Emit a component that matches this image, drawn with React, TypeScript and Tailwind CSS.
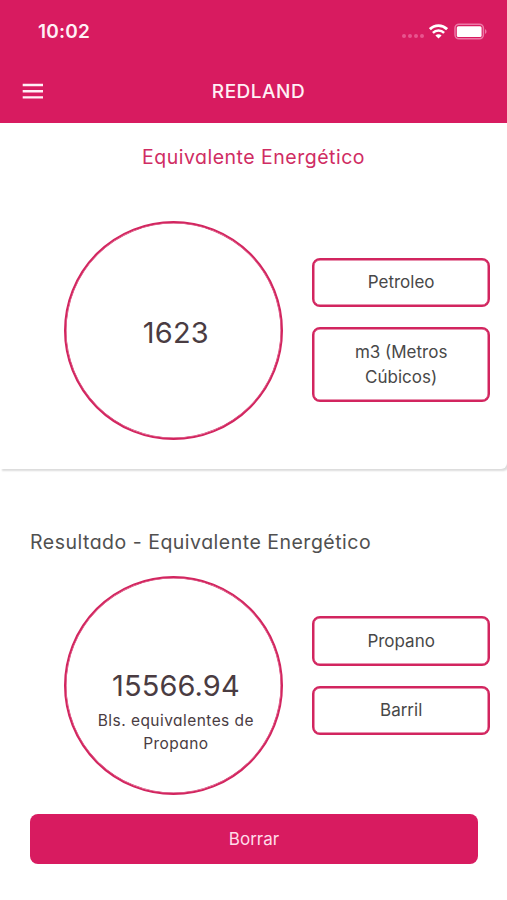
import React from 'react';

const StatusBar: React.FC = () => (
  <div className="flex h-[62px] items-center justify-between pl-[38px] pr-[20px]">
    <span className="mt-[2px] text-[19px] leading-6 font-semibold tracking-[0.2px] text-[#fff0f6]">10:02</span>
    <div className="flex items-center">
      <div className="mr-[5px] mt-[10px] flex gap-[2px]">
        {[0, 1, 2, 3].map(dot => (
          <span key={dot} className="h-1 w-1 rounded-full bg-[#e8558e]" />
        ))}
      </div>
      <svg width="19" height="15" viewBox="0 0 19 15" fill="none" stroke="white" strokeWidth="2.8" className="mr-[6px]">
        <path d="M.9 5.2C5.8 .4 13.2 .4 18.1 5.2" />
        <path d="M3.9 8.8c3.1-3 8.1-3 11.2 0" strokeWidth="2.5" />
        <path d="M9.5 14.5 6.4 11.5c1.7-1.6 4.5-1.6 6.2 0Z" fill="white" stroke="none" />
      </svg>
      <svg width="33" height="17" viewBox="0 0 33 17" fill="none">
        <rect x="1" y="1.2" width="28.4" height="14.6" rx="4" stroke="#ed78a6" strokeWidth="1.5" />
        <rect x="2.8" y="3.2" width="24.8" height="10.8" rx="1.5" fill="white" />
        <path d="M31 6.2c2 .6 2 4 0 4.6Z" fill="#ed78a6" />
      </svg>
    </div>
  </div>
);

const Header: React.FC = () => (
  <header className="h-[123px] bg-[#d81b60]">
    <StatusBar />
    <div className="grid h-[58px] grid-cols-3 items-center px-[22px]">
      <button aria-label="Abrir menú" className="w-[22px]">
        <svg width="22" height="16" viewBox="0 0 22 16" stroke="#fff0f6" strokeWidth="2.4">
          <path d="M.7 2H21M.7 8.2H21M.7 14.4H21" />
        </svg>
      </button>
      <h1 className="pt-px pl-[10px] text-center text-[19px] leading-7 font-medium tracking-[0.5px] text-[#fff0f6]">REDLAND</h1>
    </div>
  </header>
);

const Circle: React.FC<{ children: React.ReactNode }> = ({ children }) => (
  <div className="ml-[64.4px] h-[219px] w-[219px] shrink-0 rounded-full border-2 border-[#d2255f] pl-[4px] text-center text-[#4a3c42] shadow-[inset_0_0_0_0.5px_#d2255f]">
    {children}
  </div>
);

const Option: React.FC<{ label: string }> = ({ label }) => (
  <button className="w-[177.5px] rounded-lg border-2 border-[#d2255f] px-7 pt-[10.5px] pb-[9.5px] text-[17px] leading-[25.5px] text-[#484848] shadow-[inset_0_0_0_0.5px_#d2255f]">
    {label}
  </button>
);

const App: React.FC = () => (
  <div className="h-[900px] w-[507px] overflow-hidden bg-white font-['Inter',sans-serif]">
    <Header />
    <section className="h-[346px] rounded-br-[6px] bg-white shadow-[2px_2px_2px_0px_#dcdcdc]">
      <h2 className="pt-[20px] text-center text-[19.5px] leading-7 tracking-[0.5px] text-[#d02c63] [font-feature-settings:'cv11']">Equivalente Energético</h2>
      <div className="mt-[49.5px] flex gap-[29px]">
        <Circle>
          <p className="mt-[90px] text-[29px] leading-10 tracking-[0.2px]">1623</p>
        </Circle>
        <div className="mt-[37px] flex flex-col gap-[20.4px]">
          <Option label="Petroleo" />
          <Option label="m3 (Metros Cúbicos)" />
        </div>
      </div>
    </section>
    <section className="pt-[59px]">
      <h2 className="pl-[30px] text-[19.5px] leading-7 tracking-[0.5px] text-[#505050] [font-feature-settings:'cv11']">Resultado - Equivalente Energético</h2>
      <div className="mt-[20px] flex gap-[29px]">
        <Circle>
          <div className="[font-feature-settings:'cv11']">
            <p className="mt-[88px] text-[29px] leading-10 tracking-[0.1px]">15566.94</p>
            <p className="mt-[3px] px-4 text-[15.5px] leading-[23px] tracking-[0.45px]">Bls. equivalentes de Propano</p>
          </div>
        </Circle>
        <div className="mt-[40px] flex flex-col gap-[20px]">
          <Option label="Propano" />
          <Option label="Barril" />
        </div>
      </div>
      <button className="mt-[19px] ml-[30px] h-[50px] w-[448px] rounded-lg bg-[#d81b60] pt-px text-[17px] text-[#ffdbe8]">Borrar</button>
    </section>
  </div>
);

export default App;
